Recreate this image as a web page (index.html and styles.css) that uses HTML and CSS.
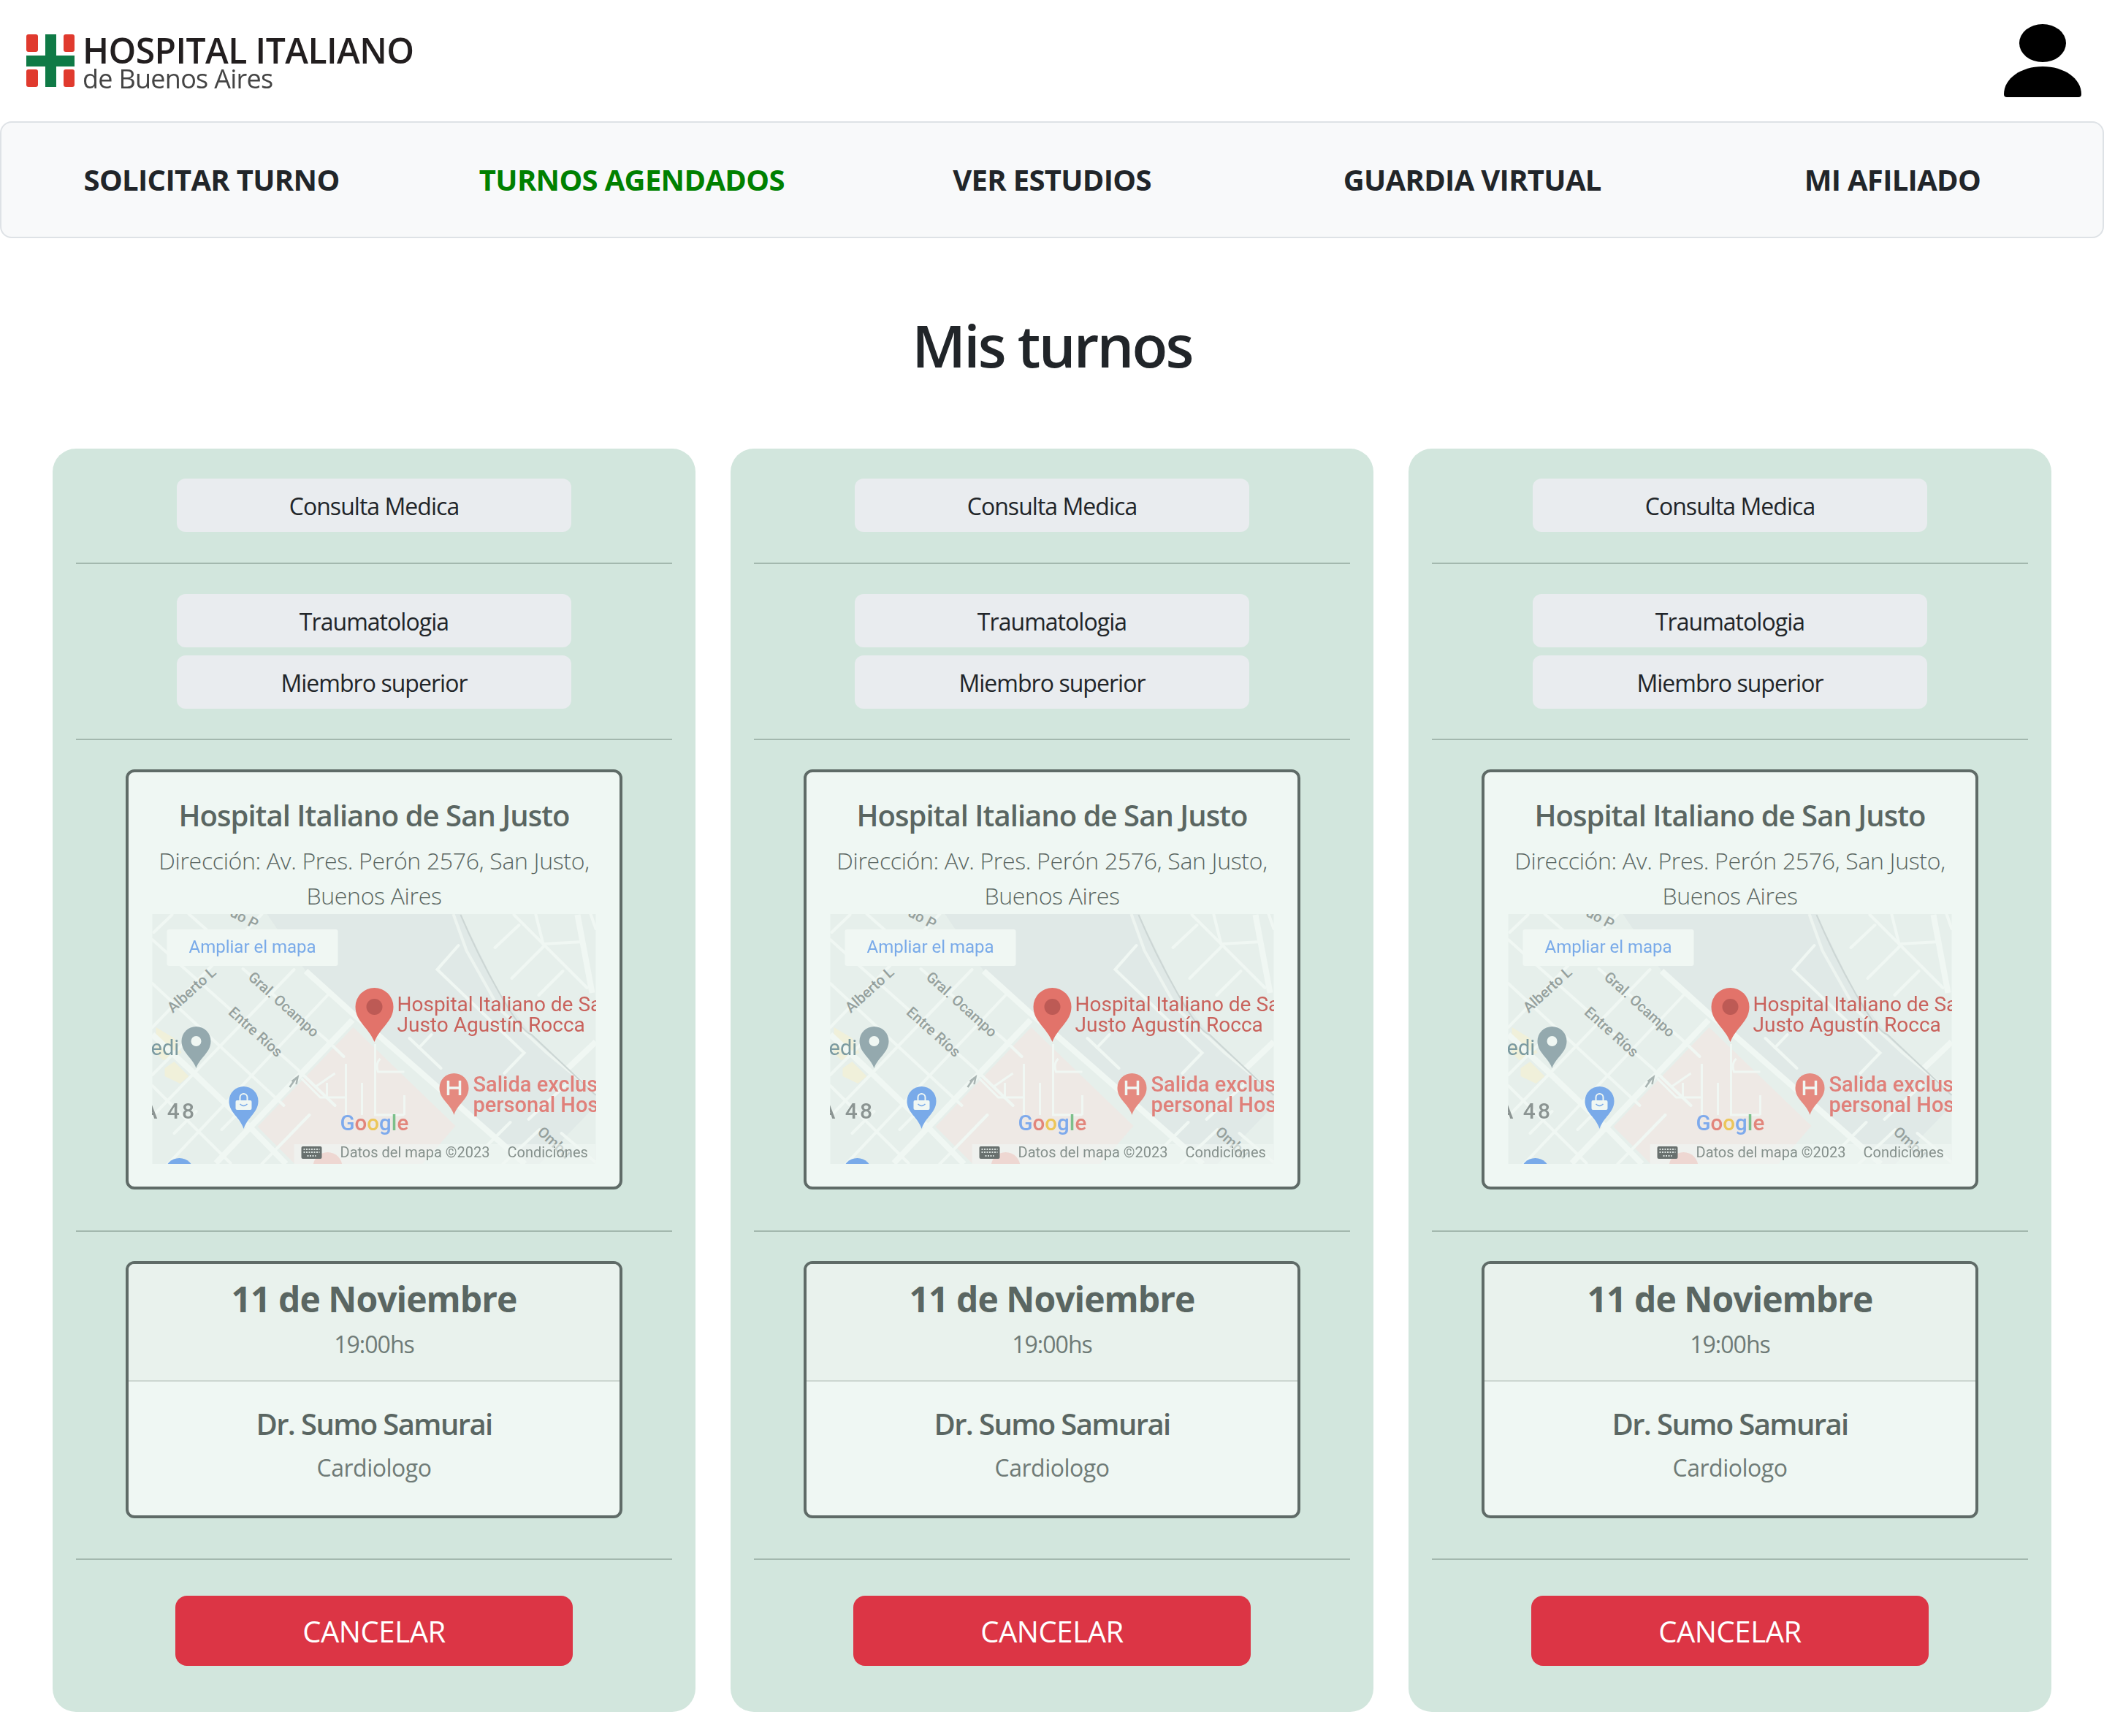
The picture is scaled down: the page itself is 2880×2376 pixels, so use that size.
FILE: index.html
```html
<!DOCTYPE html>
<html lang="en">
<head>
    <meta charset="UTF-8">
    <meta name="viewport" content="width=device-width, initial-scale=1.0">
    <title>Mis turnos</title>
    <link rel="stylesheet" href="styles.css">
</head>
<body>
    <!-- map drawing, used once per card -->
    <svg class="sprite" xmlns="http://www.w3.org/2000/svg">
        <symbol id="map" viewBox="0 0 607 342">
            <rect width="607" height="342" fill="#e6efeb"/>
            <polygon points="157,0 422,0 475,108 519,165 607,245 607,262 530,342 510,342 475,311 312,168 210,78" fill="#e0e9e7"/>
            <polygon points="275,155 415,290 370,342 195,342 144,291" fill="#eee9e5"/>
            <polygon points="5,155 30,170 40,190 15,200 5,190" fill="#f0f0da"/>
            <polygon points="17,211 30,202 50,222 38,232 17,222" fill="#f0f0da"/>
            <g fill="none" stroke="#f0f7f3" stroke-width="4" stroke-linecap="round">
                <path d="M2 25L27 1M0 155L150 0M0 277L194 76M0 365L240 111M0 220L60 160"/>
                <path d="M0 35L40 71L197 211L250 262M0 95L180 262M124 75L237 171L262 195M0 235L107 341M50 0L120 62"/>
                <path d="M150 342L215 275M95 295L140 250M30 300L60 270"/>
                <path d="M469 46L502 15M492 88L535 45M495 1L595 101M525 1L535 41L589 38M562 78L529 111"/>
                <path d="M419 43L390 76L509 190L482 218M352 170L395 211M365 183L382 165M600 0L607 20"/>
                <path d="M515 281L569 231M445 330L490 285M480 342L530 295M560 300L607 340"/>
            </g>
            <path d="M204 225L230 251L265 251M265 205V275M224 236L250 218M239 231V251M287 231V275M305 178V275L345 275M312 198Q305 205 309 216L345 216M345 248V275" fill="none" stroke="#f0f7f3" stroke-width="3"/>
            <g fill="none" stroke="#f0f7f3" stroke-width="8">
                <path d="M87 341L274 145M57 218L137 295L183 342M210 78L273 135L312 168L475 311L510 342M0 165L57 218"/>
                <path d="M582 1L602 108M569 211L607 175"/>
            </g>
            <path d="M412 0L430 50L475 130L540 190L607 245" fill="none" stroke="#edf4f0" stroke-width="4"/>
            <path d="M422 1Q445 55 475 108T519 165L607 248" fill="none" stroke="#ccd6d4" stroke-width="2"/>
            <path d="M191 229L199 223L197 233M197 224L188 237" fill="none" stroke="#a8b4b2" stroke-width="2.5"/>

            <g class="map-road">
                <text transform="translate(105,2) rotate(28)">uo P</text>
                <text transform="translate(28,136) rotate(-42)">Alberto L</text>
                <text transform="translate(130,88) rotate(42)">Gral. Ocampo</text>
                <text transform="translate(103,136) rotate(42)">Entre Ríos</text>
                <text transform="translate(526,300) rotate(42)">Ombú</text>
            </g>
            <text class="map-label-grey" x="-2" y="193">edi</text>
            <text class="map-number" x="-13" y="280">A 48</text>

            <rect x="20" y="21" width="234" height="50" rx="3" fill="#f0f7f3"/>
            <text class="map-link" x="50" y="53">Ampliar el mapa</text>

            <circle cx="240" cy="346" r="20" fill="#eba9a1"/>
            <circle cx="37" cy="354" r="20" fill="#79aae9"/>

            <path d="M304 175C296 155 278 147 278 127A26 26 0 0 1 330 127C330 147 312 155 304 175Z" fill="#e2736a"/>
            <circle cx="304" cy="127" r="11" fill="#bd5a55"/>
            <path d="M60 211C55 196 40 190 40 174A20 20 0 0 1 80 174C80 190 65 196 60 211Z" fill="#94a9ae"/>
            <circle cx="60" cy="174" r="7" fill="#f0f7f3"/>
            <path d="M125 294C120 278 105 272 105 256A20 20 0 0 1 145 256C145 272 130 278 125 294Z" fill="#79aae9"/>
            <rect x="114" y="255" width="22" height="13" rx="2" fill="#f0f7f3"/>
            <path d="M120 255V251A5 5 0 0 1 130 251V255" fill="none" stroke="#f0f7f3" stroke-width="2"/>
            <path d="M120 260Q125 265 130 260" fill="none" stroke="#79aae9" stroke-width="1.5"/>
            <path d="M413 275C408 259 393 254 393 238A20 20 0 0 1 433 238C433 254 418 259 413 275Z" fill="#e58a80"/>
            <path d="M405 228V248M421 228V248M405 238H421" fill="none" stroke="#f0f7f3" stroke-width="3.5"/>

            <text class="map-place" x="335" y="133">Hospital Italiano de San</text>
            <text class="map-place" x="335" y="161">Justo Agustín Rocca</text>
            <text class="map-exit" x="439" y="243">Salida exclusiva para</text>
            <text class="map-exit" x="439" y="271">personal Hospital</text>

            <text class="map-google" x="257" y="296"><tspan fill="#7eaaec">G</tspan><tspan fill="#e2857b">o</tspan><tspan fill="#ecc65a">o</tspan><tspan fill="#7eaaec">g</tspan><tspan fill="#7cbf8a">l</tspan><tspan fill="#e2857b">e</tspan></text>

            <rect x="194" y="315" width="413" height="27" fill="#f0f7f3" fill-opacity="0.6"/>
            <rect x="204" y="318" width="28" height="17" rx="2" fill="#68706e"/>
            <path d="M207 322H229M207 326H229M212 331H224" stroke="#d8e0dd" stroke-width="2" stroke-dasharray="2 1.5"/>
            <text class="map-small" x="257" y="333">Datos del mapa ©2023</text>
            <text class="map-small" x="486" y="333">Condiciones</text>
        </symbol>
    </svg>

    <header class="top-bar">
        <div class="logo">
            <svg class="logo-mark" viewBox="0 0 66 72">
                <rect width="16" height="24" rx="3" fill="#e03a2e"/>
                <rect x="51" width="15" height="24" rx="3" fill="#e03a2e"/>
                <rect y="48" width="16" height="24" rx="3" fill="#e03a2e"/>
                <rect x="51" y="48" width="15" height="24" rx="3" fill="#e03a2e"/>
                <rect x="26" width="15" height="72" fill="#0f7a46"/>
                <rect y="29" width="66" height="15" fill="#0f7a46"/>
            </svg>
            <div class="logo-text">
                <div class="logo-name">HOSPITAL ITALIANO</div>
                <div class="logo-sub">de Buenos Aires</div>
            </div>
        </div>
        <svg class="user-icon" viewBox="0 0 106 100">
            <ellipse cx="53" cy="26" rx="32" ry="26"/>
            <path d="M0 96C0 74 24 58 53 58S106 74 106 96Q106 100 102 100H4Q0 100 0 96Z"/>
        </svg>
    </header>

    <nav class="main-nav">
        <a href="#">SOLICITAR TURNO</a>
        <a href="#" class="active">TURNOS AGENDADOS</a>
        <a href="#">VER ESTUDIOS</a>
        <a href="#">GUARDIA VIRTUAL</a>
        <a href="#">MI AFILIADO</a>
    </nav>

    <h1>Mis turnos</h1>

    <div class="turnos">
        <div class="turno">
            <div class="pill">Consulta Medica</div>
            <hr class="first">
            <div class="pill">Traumatologia</div>
            <div class="pill">Miembro superior</div>
            <hr class="second">
            <div class="box place">
                <h5>Hospital Italiano de San Justo</h5>
                <p>Dirección: Av. Pres. Perón 2576, San Justo, Buenos Aires</p>
                <div class="map-frame"><svg class="map"><use href="#map"/></svg></div>
            </div>
            <hr class="wide">
            <div class="box">
                <div class="box-head">
                    <div class="date">11 de Noviembre</div>
                    <div class="time">19:00hs</div>
                </div>
                <div class="box-body">
                    <div class="doctor">Dr. Sumo Samurai</div>
                    <div class="specialty">Cardiologo</div>
                </div>
            </div>
            <hr class="wide last">
            <button type="button">CANCELAR</button>
        </div>

        <div class="turno">
            <div class="pill">Consulta Medica</div>
            <hr class="first">
            <div class="pill">Traumatologia</div>
            <div class="pill">Miembro superior</div>
            <hr class="second">
            <div class="box place">
                <h5>Hospital Italiano de San Justo</h5>
                <p>Dirección: Av. Pres. Perón 2576, San Justo, Buenos Aires</p>
                <div class="map-frame"><svg class="map"><use href="#map"/></svg></div>
            </div>
            <hr class="wide">
            <div class="box">
                <div class="box-head">
                    <div class="date">11 de Noviembre</div>
                    <div class="time">19:00hs</div>
                </div>
                <div class="box-body">
                    <div class="doctor">Dr. Sumo Samurai</div>
                    <div class="specialty">Cardiologo</div>
                </div>
            </div>
            <hr class="wide last">
            <button type="button">CANCELAR</button>
        </div>

        <div class="turno">
            <div class="pill">Consulta Medica</div>
            <hr class="first">
            <div class="pill">Traumatologia</div>
            <div class="pill">Miembro superior</div>
            <hr class="second">
            <div class="box place">
                <h5>Hospital Italiano de San Justo</h5>
                <p>Dirección: Av. Pres. Perón 2576, San Justo, Buenos Aires</p>
                <div class="map-frame"><svg class="map"><use href="#map"/></svg></div>
            </div>
            <hr class="wide">
            <div class="box">
                <div class="box-head">
                    <div class="date">11 de Noviembre</div>
                    <div class="time">19:00hs</div>
                </div>
                <div class="box-body">
                    <div class="doctor">Dr. Sumo Samurai</div>
                    <div class="specialty">Cardiologo</div>
                </div>
            </div>
            <hr class="wide last">
            <button type="button">CANCELAR</button>
        </div>
    </div>
</body>
</html>
```

FILE: styles.css
```css
* {
    box-sizing: border-box;
}
body {
    margin: 0;
    font-family: "Open Sans", sans-serif;
    font-size: 32px;
    line-height: 48px;
    letter-spacing: -0.03em;
    color: #212529;
    background-color: white;
}
.sprite {
    display: none;
}

/* top bar */
.top-bar {
    height: 166px;
    padding: 0 31px 0 36px;
    display: flex;
    justify-content: space-between;
    align-items: center;
}
.logo {
    display: flex;
    align-items: center;
    gap: 11px;
    filter: blur(0.4px);
}
.logo-mark {
    width: 66px;
    height: 72px;
}
.logo-name {
    margin-top: 2px;
    font-size: 48px;
    line-height: 48px;
    font-weight: 600;
    letter-spacing: -0.012em;
    color: #221e1f;
}
.logo-sub {
    font-size: 36px;
    line-height: 30px;
    letter-spacing: -0.02em;
    color: #444;
}
.user-icon {
    width: 106px;
    height: 100px;
}

/* nav */
.main-nav {
    height: 160px;
    display: flex;
    align-items: center;
    background-color: #f8f9fa;
    border: 2px solid #dee2e6;
    border-radius: 16px;
}
.main-nav a {
    flex: 1;
    text-align: center;
    font-size: 40px;
    font-weight: 700;
    letter-spacing: -0.017em;
    color: #212529;
    text-decoration: none;
}
.main-nav a.active {
    color: #008000;
}

h1 {
    margin: 98px 0 94px;
    text-align: center;
    font-size: 80px;
    line-height: 96px;
    font-weight: 600;
    letter-spacing: -0.035em;
}

/* cards */
.turnos {
    display: grid;
    grid-template-columns: repeat(3, 880px);
    gap: 48px;
    padding: 0 72px;
}
.turno {
    height: 1729px;
    padding: 41px 32px 0;
    display: flex;
    flex-direction: column;
    align-items: center;
    background-color: #d2e6dd;
    border-radius: 32px;
}
.turno hr {
    width: 100%;
    height: 2px;
    border: none;
    background-color: #a3b8ae;
}
.turno hr.first {
    margin: 42px 0 41px;
}
.turno hr.second {
    margin: 41px 0 40px;
}
.turno hr.wide {
    margin: 56px 0 40px;
}
.turno hr.last {
    margin: 55px 0 49px;
}
.pill {
    width: 540px;
    height: 73px;
    line-height: 76px;
    text-align: center;
    background-color: #e9ecef;
    border-radius: 12px;
}
.pill + .pill {
    margin-top: 11px;
}

/* boxes */
.box {
    width: 680px;
    border: 4px solid #5f6b67;
    border-radius: 12px;
    background-color: #eff7f3;
    text-align: center;
    color: #5a6662;
    overflow: hidden;
}
.place {
    padding: 35px 32px 31px;
}
.place h5 {
    margin: 0 0 14px;
    font-size: 40px;
    line-height: 48px;
    font-weight: 600;
    letter-spacing: -0.024em;
}
.place p {
    margin: 0 0 1px;
    font-weight: 300;
    letter-spacing: -0.01em;
}
.map-frame {
    height: 342px;
    overflow: hidden;
}
.map {
    display: block;
    width: 100%;
    height: 100%;
    filter: blur(0.7px);
}
/* text inside the symbol is matched where the symbol is defined */
.sprite text {
    font-family: Roboto, sans-serif;
    letter-spacing: 0;
}
.map-road text {
    font-size: 20px;
    font-weight: 500;
    fill: #95a09d;
}
.map-label-grey {
    font-size: 29px;
    fill: #7b9aa0;
}
.sprite .map-number {
    font-size: 30px;
    font-weight: 500;
    letter-spacing: 3px;
    fill: #8b9492;
}
.map-link {
    font-size: 24px;
    fill: #79aae9;
}
.map-place {
    font-size: 28px;
    fill: #c9625c;
}
.map-exit {
    font-size: 29px;
    font-weight: 500;
    fill: #e0807a;
}
.map-google {
    font-size: 29.5px;
    font-weight: 500;
}
.map-small {
    font-size: 20px;
    fill: #85908c;
}
.box-head {
    height: 161px;
    padding-top: 19px;
    background-color: #e9f2ed;
    border-bottom: 2px solid #ccd6d0;
}
.date {
    font-size: 48px;
    line-height: 58px;
    font-weight: 700;
    margin-bottom: 9px;
}
.time,
.specialty {
    color: #6f7b77;
}
.specialty {
    letter-spacing: -0.015em;
}
.box-body {
    padding: 34px 0 41px;
}
.doctor {
    font-size: 40px;
    line-height: 48px;
    font-weight: 600;
    letter-spacing: -0.04em;
    margin-bottom: 12px;
}

button {
    width: 544px;
    height: 96px;
    flex-shrink: 0;
    background-color: #dc3545;
    color: white;
    border: none;
    border-radius: 16px;
    font-family: inherit;
    font-size: 40px;
    letter-spacing: -0.01em;
    cursor: pointer;
}
```
